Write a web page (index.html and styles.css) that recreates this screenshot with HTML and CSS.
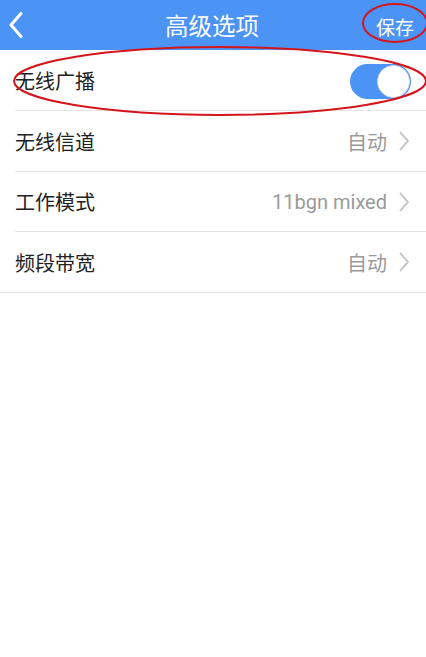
FILE: index.html
```html
<!DOCTYPE html>
<html lang="zh-CN">
<head>
    <meta charset="UTF-8">
    <meta name="viewport" content="width=device-width, initial-scale=1.0">
    <title>高级选项</title>
    <link rel="stylesheet" href="styles.css">
</head>
<body>
    <div class="page">
        <div class="header">
            <span class="back">
                <svg width="16" height="26" viewBox="0 0 16 26">
                    <path d="M13 1.5 L3 13 L13 24.5" fill="none" stroke="#fff" stroke-width="3" stroke-linecap="round" stroke-linejoin="round"/>
                </svg>
            </span>
            <div class="title">高级选项</div>
            <span class="save">保存</span>
        </div>

        <div class="list">
            <div class="row">
                <span class="label">无线广播</span>
                <span class="toggle"><span class="knob"></span></span>
            </div>
            <div class="row">
                <span class="label">无线信道</span>
                <span class="value">自动</span>
                <span class="arrow">
                    <svg width="12" height="20" viewBox="0 0 12 20"><path d="M2 1 L10 10 L2 19" fill="none" stroke="#c8c8c8" stroke-width="2"/></svg>
                </span>
            </div>
            <div class="row short">
                <span class="label">工作模式</span>
                <span class="value">11bgn mixed</span>
                <span class="arrow">
                    <svg width="12" height="20" viewBox="0 0 12 20"><path d="M2 1 L10 10 L2 19" fill="none" stroke="#c8c8c8" stroke-width="2"/></svg>
                </span>
            </div>
            <div class="row last">
                <span class="label">频段带宽</span>
                <span class="value">自动</span>
                <span class="arrow">
                    <svg width="12" height="20" viewBox="0 0 12 20"><path d="M2 1 L10 10 L2 19" fill="none" stroke="#c8c8c8" stroke-width="2"/></svg>
                </span>
            </div>
        </div>

        <!-- red annotation marks drawn over the screenshot -->
        <svg class="marks" width="426" height="130" viewBox="0 0 426 130">
            <ellipse cx="395" cy="23" rx="32" ry="19" fill="none" stroke="#d4161c" stroke-width="2"/>
            <ellipse cx="220" cy="81" rx="206" ry="34" fill="none" stroke="#d4161c" stroke-width="2"/>
        </svg>
    </div>
</body>
</html>
```

FILE: styles.css
```css
/* advanced options page */
* {
    box-sizing: border-box;
}

body {
    margin: 0;
    background: #fff;
    font-family: Roboto, "Noto Sans CJK SC", sans-serif;
}

.page {
    position: relative;
    width: 426px;
    height: 657px;
    background: #fff;
}

.header {
    height: 50px;
    background: #4b93f4;
    display: flex;
    align-items: center;
    padding: 0 12px 0 8px;
    color: #fff;
}

.back {
    width: 40px;
    display: flex;
    align-items: center;
}

.title {
    flex: 1;
    text-align: center;
    font-size: 23.5px;
    padding-left: 2px;
}

.save {
    width: 40px;
    text-align: right;
    font-size: 19px;
    padding-top: 2px;
}

.row {
    height: 61px;
    margin-left: 15px;
    padding-right: 15px;
    display: flex;
    align-items: center;
    border-bottom: 1px solid #e4e4e4;
}

.row.short {
    height: 60px;
}

.row.last {
    margin-left: 0;
    padding-left: 15px;
}

.label {
    flex: 1;
    font-size: 20px;
    color: #222;
}

.value {
    font-size: 20px;
    color: #9a9a9a;
}

.arrow {
    display: flex;
    align-items: center;
    margin-left: 11px;
    margin-right: 1px;
}

.toggle {
    width: 61px;
    height: 35px;
    border-radius: 18px;
    background: #4b93f4;
    position: relative;
    margin-top: 2px;
}

.knob {
    position: absolute;
    right: 1px;
    top: 1px;
    width: 33px;
    height: 33px;
    border-radius: 50%;
    background: #fff;
    border: 1px solid #d8dde6;
}

.marks {
    position: absolute;
    left: 0;
    top: 0;
    pointer-events: none;
}
```
